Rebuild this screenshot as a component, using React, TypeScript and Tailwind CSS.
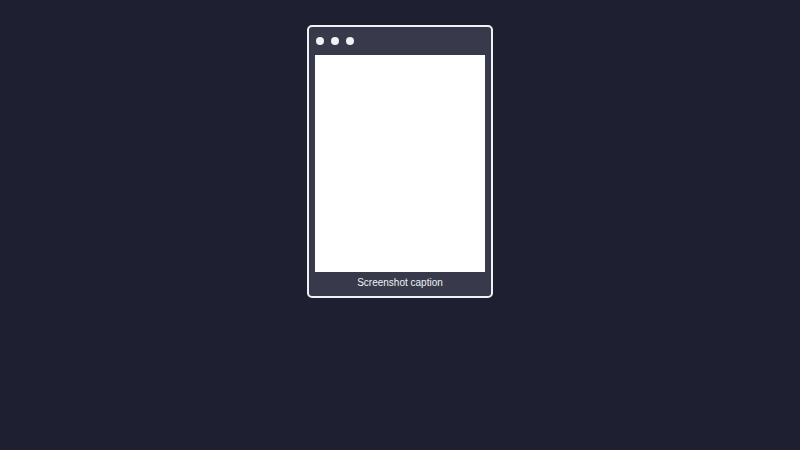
import React from 'react';

const dots = ['close', 'minimize', 'maximize'];

const BrowserFrame: React.FC<{ caption: string }> = ({ caption }) => {
  return (
    <figure className="w-[186px] rounded-[5px] border-2 border-[#f1f2f6] bg-[#38394a] px-1.5 pb-0.5 text-[#f1f2f6]">
      <div className="flex h-7 items-center gap-[7px] pl-px">
        {dots.map((dot) => (
          <span key={dot} className="size-2 rounded-full bg-[#f1f2f6]" />
        ))}
      </div>
      <div className="h-[217px] bg-white" />
      <figcaption className="text-center text-[10px] leading-[22px]">{caption}</figcaption>
    </figure>
  );
};

const App: React.FC = () => {
  return (
    <main className="flex min-h-screen items-start justify-center bg-[#1e1f30] pt-[25px] font-['Liberation_Sans',sans-serif]">
      <BrowserFrame caption="Screenshot caption" />
    </main>
  );
};

export default App;
